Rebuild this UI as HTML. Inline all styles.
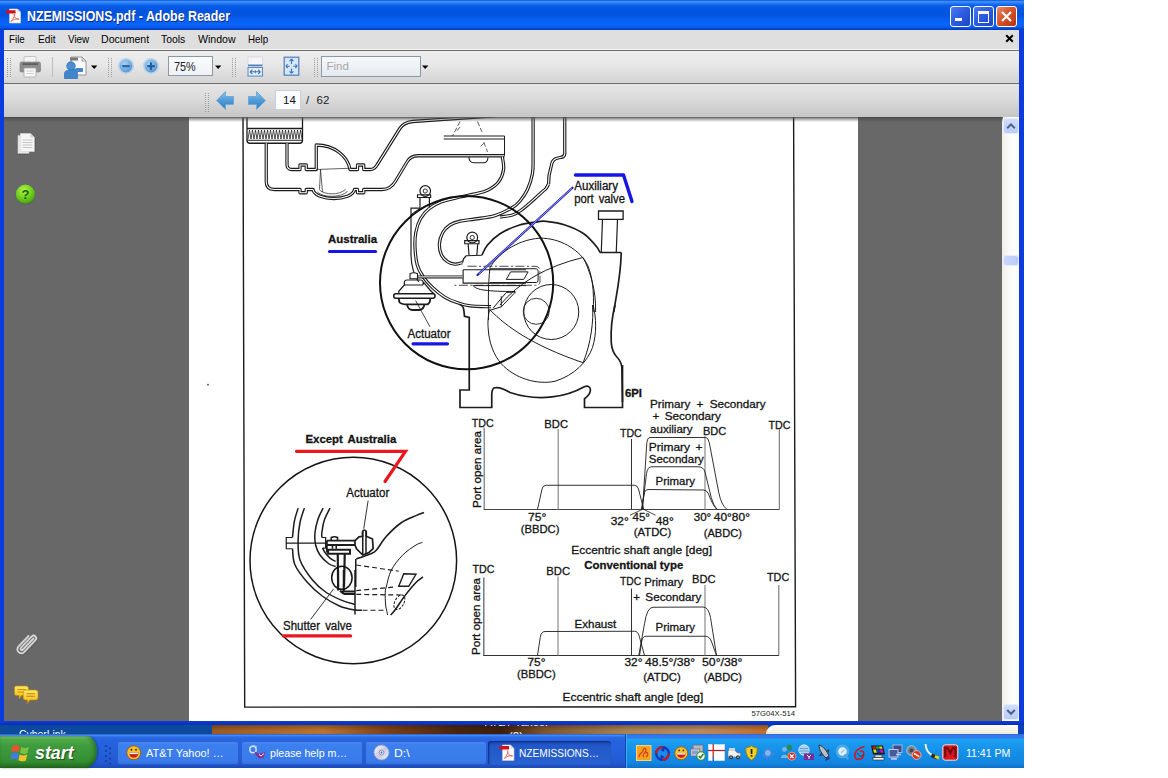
<!DOCTYPE html>
<html>
<head>
<meta charset="utf-8">
<title>NZEMISSIONS.pdf - Adobe Reader</title>
<style>
html,body{margin:0;padding:0;background:#fff;}
body{width:1168px;height:778px;position:relative;overflow:hidden;font-family:"Liberation Sans",sans-serif;}
.a{position:absolute;}
.t{position:absolute;white-space:nowrap;line-height:1;transform-origin:0 0;}
#win{left:0;top:0;width:1024px;height:725px;background:linear-gradient(to bottom,#0a3ae0 0,#0a3ae0 721px,#0c3cd8 721.5px,#0a2cb4 725px);}
#title{left:0;top:0;width:1024px;height:30px;background:linear-gradient(to bottom,#0a50d2 0%,#3a8ff8 5%,#2c7ef4 10%,#0a5ee8 18%,#0356e2 30%,#0454dc 50%,#0760f4 66%,#0a64fa 84%,#0656e6 92%,#0038b8 100%);}
#menubar{left:4px;top:30px;width:1015px;height:20px;background:#dfdfdf;}
#tb1{left:4px;top:51px;width:1015px;height:32px;background:linear-gradient(to bottom,#eeeeee 0%,#e8e8e8 40%,#d4d4d4 100%);}
#tb2{left:4px;top:84px;width:1015px;height:33px;background:linear-gradient(to bottom,#e6e6e6 0%,#dcdcdc 40%,#c6c6c6 100%);}
.hl{left:4px;width:1015px;height:1px;background:#6e6e6e;}
#pane{left:4px;top:117px;width:1015px;height:604px;background:#686868;}
#page{left:189px;top:117px;width:669px;height:604px;background:#fff;}
#sb{left:1002px;top:117px;width:17px;height:604px;background:#fafaf6;}
.menu{font-size:11px;color:#000;top:34px;}
#taskbar{left:0;top:734px;width:1024px;height:34px;background:linear-gradient(to bottom,#3a80ee 0%,#2a6be4 8%,#2663e0 20%,#2560dc 50%,#2259d2 85%,#1c4ab8 100%);}
.tbtn{top:741px;height:24px;border-radius:3px;background:linear-gradient(to bottom,#4d8cf4 0%,#3c7fee 15%,#3a7beb 80%,#346fe0 100%);box-shadow:inset 0 0 0 1px rgba(30,70,180,.55);}
.tbtxt{font-size:11.5px;color:#fff;top:747.5px;}
</style>
</head>
<body>
<div id="win" class="a"></div>
<div id="title" class="a"></div>
<div id="menubar" class="a"></div>
<div class="a" style="left:4px;top:49px;width:1015px;height:1px;background:#f6f6f6;"></div>
<div class="a hl" style="top:50px"></div>
<div id="tb1" class="a"></div>
<div class="a hl" style="top:83px"></div>
<div id="tb2" class="a"></div>
<div id="pane" class="a"></div>
<div id="page" class="a"></div>
<div id="sb" class="a"></div>
<!-- title bar -->
<svg class="a" style="left:5px;top:8px" width="18" height="16" viewBox="0 0 18 16">
  <path d="M4.5 1 L12.5 1 L15.5 4 L15.5 15 L4.5 15 Z" fill="#fff" stroke="#d6d6e2" stroke-width="0.6"/>
  <path d="M12.5 1 L12.5 4 L15.5 4 Z" fill="#d8d8e4"/>
  <rect x="1" y="2.2" width="9.6" height="3.4" rx="0.5" fill="#d4101c"/>
  <path d="M6.2 12.8 C8 11.2 9.2 9 9.6 6.9 C9.8 5.9 8.8 5.9 9 6.9 C9.5 9.4 11 11 13.6 11.4 C14.5 11.5 14.3 10.7 13.4 10.7 C10.9 10.8 8 11.6 6.5 13.1 C5.9 13.7 5.6 13.3 6.2 12.8 Z" fill="none" stroke="#e05a52" stroke-width="0.9"/>
</svg>
<div class="t" id="ttl" style="left:26.5px;top:9px;font-size:14.5px;font-weight:bold;color:#fff;text-shadow:1px 1px 0 #0a2a8c;--w:203px;transform:scaleX(0.8565)">NZEMISSIONS.pdf - Adobe Reader</div>
<!-- window buttons -->
<div class="a" style="left:950px;top:6px;width:19px;height:19px;border-radius:3px;border:1px solid #fff;background:linear-gradient(135deg,#4a7cf0 0%,#2a5be0 50%,#1d46c2 100%);"></div>
<div class="a" style="left:955px;top:18px;width:7px;height:3px;background:#fff;"></div>
<div class="a" style="left:973px;top:6px;width:19px;height:19px;border-radius:3px;border:1px solid #fff;background:linear-gradient(135deg,#4a7cf0 0%,#2a5be0 50%,#1d46c2 100%);"></div>
<div class="a" style="left:978px;top:11px;width:9px;height:8px;border:1px solid #fff;border-top-width:3px;box-sizing:content-box;"></div>
<div class="a" style="left:996px;top:6px;width:19px;height:19px;border-radius:3px;border:1px solid #fff;background:linear-gradient(135deg,#ea8a6c 0%,#d9532c 45%,#b8320e 100%);"></div>
<svg class="a" style="left:996px;top:6px" width="21" height="21" viewBox="0 0 21 21"><path d="M6 6 L15 15 M15 6 L6 15" stroke="#fff" stroke-width="2.2" stroke-linecap="butt"/></svg>
<!-- menu -->
<div class="t menu" style="left:9px;--w:16px;transform:scaleX(0.8889)">File</div>
<div class="t menu" style="left:37.5px;--w:17.5px;transform:scaleX(0.9211)">Edit</div>
<div class="t menu" style="left:67.5px;--w:21.5px;transform:scaleX(0.8958)">View</div>
<div class="t menu" style="left:101px;--w:48px;transform:scaleX(0.9600)">Document</div>
<div class="t menu" style="left:161px;--w:24.5px;transform:scaleX(0.9423)">Tools</div>
<div class="t menu" style="left:198px;--w:37.5px;transform:scaleX(0.9615)">Window</div>
<div class="t menu" style="left:248px;--w:20.5px;transform:scaleX(0.8913)">Help</div>
<svg class="a" style="left:1005px;top:34px" width="9" height="9" viewBox="0 0 9 9"><path d="M1.2 1.2 L7.8 7.8 M7.8 1.2 L1.2 7.8" stroke="#000" stroke-width="2"/></svg>
<!-- grippers -->
<svg class="a" style="left:6px;top:58px" width="6" height="20"><g fill="#9c9c9c"><rect x="1" y="0" width="1" height="1"/><rect x="4" y="0" width="1" height="1"/><rect x="1" y="2" width="1" height="1"/><rect x="4" y="2" width="1" height="1"/><rect x="1" y="4" width="1" height="1"/><rect x="4" y="4" width="1" height="1"/><rect x="1" y="6" width="1" height="1"/><rect x="4" y="6" width="1" height="1"/><rect x="1" y="8" width="1" height="1"/><rect x="4" y="8" width="1" height="1"/><rect x="1" y="10" width="1" height="1"/><rect x="4" y="10" width="1" height="1"/><rect x="1" y="12" width="1" height="1"/><rect x="4" y="12" width="1" height="1"/><rect x="1" y="14" width="1" height="1"/><rect x="4" y="14" width="1" height="1"/><rect x="1" y="16" width="1" height="1"/><rect x="4" y="16" width="1" height="1"/><rect x="1" y="18" width="1" height="1"/><rect x="4" y="18" width="1" height="1"/></g></svg>
<svg class="a" style="left:107px;top:58px" width="6" height="20"><g fill="#9c9c9c"><rect x="1" y="0" width="1" height="1"/><rect x="4" y="0" width="1" height="1"/><rect x="1" y="2" width="1" height="1"/><rect x="4" y="2" width="1" height="1"/><rect x="1" y="4" width="1" height="1"/><rect x="4" y="4" width="1" height="1"/><rect x="1" y="6" width="1" height="1"/><rect x="4" y="6" width="1" height="1"/><rect x="1" y="8" width="1" height="1"/><rect x="4" y="8" width="1" height="1"/><rect x="1" y="10" width="1" height="1"/><rect x="4" y="10" width="1" height="1"/><rect x="1" y="12" width="1" height="1"/><rect x="4" y="12" width="1" height="1"/><rect x="1" y="14" width="1" height="1"/><rect x="4" y="14" width="1" height="1"/><rect x="1" y="16" width="1" height="1"/><rect x="4" y="16" width="1" height="1"/><rect x="1" y="18" width="1" height="1"/><rect x="4" y="18" width="1" height="1"/></g></svg>
<svg class="a" style="left:231px;top:58px" width="6" height="20"><g fill="#9c9c9c"><rect x="1" y="0" width="1" height="1"/><rect x="4" y="0" width="1" height="1"/><rect x="1" y="2" width="1" height="1"/><rect x="4" y="2" width="1" height="1"/><rect x="1" y="4" width="1" height="1"/><rect x="4" y="4" width="1" height="1"/><rect x="1" y="6" width="1" height="1"/><rect x="4" y="6" width="1" height="1"/><rect x="1" y="8" width="1" height="1"/><rect x="4" y="8" width="1" height="1"/><rect x="1" y="10" width="1" height="1"/><rect x="4" y="10" width="1" height="1"/><rect x="1" y="12" width="1" height="1"/><rect x="4" y="12" width="1" height="1"/><rect x="1" y="14" width="1" height="1"/><rect x="4" y="14" width="1" height="1"/><rect x="1" y="16" width="1" height="1"/><rect x="4" y="16" width="1" height="1"/><rect x="1" y="18" width="1" height="1"/><rect x="4" y="18" width="1" height="1"/></g></svg>
<svg class="a" style="left:313px;top:58px" width="6" height="20"><g fill="#9c9c9c"><rect x="1" y="0" width="1" height="1"/><rect x="4" y="0" width="1" height="1"/><rect x="1" y="2" width="1" height="1"/><rect x="4" y="2" width="1" height="1"/><rect x="1" y="4" width="1" height="1"/><rect x="4" y="4" width="1" height="1"/><rect x="1" y="6" width="1" height="1"/><rect x="4" y="6" width="1" height="1"/><rect x="1" y="8" width="1" height="1"/><rect x="4" y="8" width="1" height="1"/><rect x="1" y="10" width="1" height="1"/><rect x="4" y="10" width="1" height="1"/><rect x="1" y="12" width="1" height="1"/><rect x="4" y="12" width="1" height="1"/><rect x="1" y="14" width="1" height="1"/><rect x="4" y="14" width="1" height="1"/><rect x="1" y="16" width="1" height="1"/><rect x="4" y="16" width="1" height="1"/><rect x="1" y="18" width="1" height="1"/><rect x="4" y="18" width="1" height="1"/></g></svg>
<svg class="a" style="left:204px;top:93px" width="6" height="20"><g fill="#9c9c9c"><rect x="1" y="0" width="1" height="1"/><rect x="4" y="0" width="1" height="1"/><rect x="1" y="2" width="1" height="1"/><rect x="4" y="2" width="1" height="1"/><rect x="1" y="4" width="1" height="1"/><rect x="4" y="4" width="1" height="1"/><rect x="1" y="6" width="1" height="1"/><rect x="4" y="6" width="1" height="1"/><rect x="1" y="8" width="1" height="1"/><rect x="4" y="8" width="1" height="1"/><rect x="1" y="10" width="1" height="1"/><rect x="4" y="10" width="1" height="1"/><rect x="1" y="12" width="1" height="1"/><rect x="4" y="12" width="1" height="1"/><rect x="1" y="14" width="1" height="1"/><rect x="4" y="14" width="1" height="1"/><rect x="1" y="16" width="1" height="1"/><rect x="4" y="16" width="1" height="1"/><rect x="1" y="18" width="1" height="1"/><rect x="4" y="18" width="1" height="1"/></g></svg>
<!-- printer -->
<svg class="a" style="left:19px;top:55px" width="24" height="24" viewBox="0 0 24 24">
  <rect x="5" y="1.5" width="12" height="7" rx="1" fill="#f4f4f4" stroke="#b9b9b9" stroke-width=".8"/>
  <rect x="1" y="7" width="20.5" height="10" rx="1.5" fill="#8d8d8d" stroke="#777" stroke-width=".6"/>
  <rect x="3.5" y="8.2" width="15.5" height="1.8" fill="#5e5e5e"/>
  <rect x="5" y="13" width="12" height="9" rx=".8" fill="#f6f6f6" stroke="#a8a8a8" stroke-width=".8"/>
  <path d="M7.5 16 H14.5 M7.5 18.5 H14.5" stroke="#c4c4c4" stroke-width=".8"/>
</svg>
<div class="a" style="left:52px;top:57px;width:1px;height:20px;background:#bdbdbd;"></div>
<!-- collaborate icon -->
<svg class="a" style="left:62px;top:54px" width="26" height="26" viewBox="0 0 26 26">
  <path d="M9 3 H20 L24 7 V21 H9 Z" fill="#f7f9fc" stroke="#8c8c8c" stroke-width=".9"/>
  <path d="M20 3 V7 H24 Z" fill="#e0e0e0" stroke="#8c8c8c" stroke-width=".7"/>
  <rect x="8" y="3.5" width="8" height="3" fill="#777"/>
  <circle cx="9" cy="12" r="4.2" fill="#4a8fd0" stroke="#2c6fb4" stroke-width=".8"/>
  <path d="M2.5 24.5 V19.5 C2.5 17 5 16 9 16 C12 16 13.5 14.8 15 14.5 H20.5 V17.5 H16 C15 18.5 15.5 21 15.5 24.5 Z" fill="#3f86cc" stroke="#2c6fb4" stroke-width=".7"/>
</svg>
<svg class="a" style="left:91px;top:65px" width="7" height="5"><path d="M0 0.5 H6.4 L3.2 4 Z" fill="#000"/></svg>
<!-- zoom -/+ -->
<svg class="a" style="left:117px;top:57px" width="18" height="18" viewBox="0 0 18 18"><defs><radialGradient id="zg" cx=".4" cy=".35" r=".7"><stop offset="0" stop-color="#a9d2f2"/><stop offset="1" stop-color="#4f8fcc"/></radialGradient></defs><circle cx="9" cy="9" r="7.2" fill="url(#zg)" stroke="#b9d3ea" stroke-width="1.6"/><rect x="5.2" y="8" width="7.6" height="2.2" rx=".6" fill="#2d68a8"/></svg>
<svg class="a" style="left:142px;top:57px" width="18" height="18" viewBox="0 0 18 18"><circle cx="9" cy="9" r="7.2" fill="url(#zg)" stroke="#b9d3ea" stroke-width="1.6"/><rect x="5.2" y="8" width="7.6" height="2.2" rx=".6" fill="#2260a6"/><rect x="7.9" y="5.3" width="2.2" height="7.6" rx=".6" fill="#2260a6"/></svg>
<!-- zoom box -->
<div class="a" style="left:168px;top:56px;width:45px;height:20px;box-sizing:border-box;border:1px solid #8b98a6;background:linear-gradient(to bottom,#fbfcfe,#eef1f6);"></div>
<div class="t" style="left:174.4px;top:61px;font-size:12px;color:#222;--w:21.6px;transform:scaleX(0.9000)">75%</div>
<svg class="a" style="left:215px;top:65px" width="7" height="5"><path d="M0 0.5 H6.4 L3.2 4 Z" fill="#000"/></svg>
<!-- fit width -->
<svg class="a" style="left:247px;top:56px" width="17" height="22" viewBox="0 0 17 22">
  <rect x="1" y="1" width="14.5" height="8" fill="#f4f6fa" stroke="#c8d0da" stroke-width=".6"/>
  <rect x="1" y="8.6" width="14.5" height="1.6" fill="#4a7eb8"/>
  <rect x="1" y="11.5" width="14.5" height="8.6" fill="#e7eff8" stroke="#5a88bd" stroke-width="1"/>
  <path d="M3 15.8 H13.5 M3 15.8 L5.4 13.6 M3 15.8 L5.4 18 M13.5 15.8 L11.1 13.6 M13.5 15.8 L11.1 18 M8.2 14.3 V17.3" stroke="#3f78b6" stroke-width="1.1" fill="none"/>
</svg>
<!-- fit page -->
<svg class="a" style="left:283px;top:56px" width="18" height="21" viewBox="0 0 18 21">
  <rect x="1.2" y="1.2" width="14.6" height="18" fill="#d6e6f6" stroke="#4e7fb6" stroke-width="1.2"/>
  <path d="M8.5 3 V8 M8.5 3 L6.6 5 M8.5 3 L10.4 5 M8.5 17.4 V12.4 M8.5 17.4 L6.6 15.4 M8.5 17.4 L10.4 15.4 M2.8 10.2 H6.8 M2.8 10.2 L4.6 8.4 M2.8 10.2 L4.6 12 M14.2 10.2 H10.2 M14.2 10.2 L12.4 8.4 M14.2 10.2 L12.4 12" stroke="#3f78b6" stroke-width="1.1" fill="none"/>
</svg>
<!-- find -->
<div class="a" style="left:321px;top:56px;width:100px;height:21px;box-sizing:border-box;border:1px solid #8b98a6;background:linear-gradient(to bottom,#f6f8fb,#e6eaf0);"></div>
<div class="t" style="left:326.5px;top:61px;font-size:11.5px;color:#a9a9a9;">Find</div>
<svg class="a" style="left:422px;top:65px" width="7" height="5"><path d="M0 0.5 H6.4 L3.2 4 Z" fill="#000"/></svg>
<!-- nav arrows -->
<svg class="a" style="left:215px;top:90px" width="20" height="21" viewBox="0 0 20 21"><defs><linearGradient id="ag" x1="0" y1="0" x2="0" y2="1"><stop offset="0" stop-color="#8cc4ee"/><stop offset=".5" stop-color="#4f9bd8"/><stop offset="1" stop-color="#2f7cc0"/></linearGradient></defs><path d="M1.5 10.5 L10.5 1.5 V6.5 H18.5 V14.5 H10.5 V19.5 Z" fill="url(#ag)" stroke="#6faad8" stroke-width="1"/></svg>
<svg class="a" style="left:247px;top:90px" width="20" height="21" viewBox="0 0 20 21"><path d="M18.5 10.5 L9.5 1.5 V6.5 H1.5 V14.5 H9.5 V19.5 Z" fill="url(#ag)" stroke="#6faad8" stroke-width="1"/></svg>
<div class="a" style="left:275px;top:90px;width:26px;height:20px;box-sizing:border-box;border:1px solid #c9d0d8;background:#fbfcfe;"></div>
<div class="t" style="left:283px;top:95px;font-size:11.5px;color:#111;">14</div>
<div class="t" style="left:306px;top:95px;font-size:11.5px;color:#222;">/</div>
<div class="t" style="left:316.5px;top:95px;font-size:11.5px;color:#222;">62</div>
<!-- pane top shadow -->

<!-- sidebar icons -->
<svg class="a" style="left:15px;top:131px" width="24" height="26" viewBox="0 0 24 26">
  <path d="M3 4.5 H14 V22.5 H3 Z" fill="#e9e9e9" stroke="#cfcfcf" stroke-width=".6"/>
  <path d="M5.5 2.5 H15.5 L19.5 6.5 V20.5 H5.5 Z" fill="#f6f6f6" stroke="#d9d9d9" stroke-width=".6"/>
  <path d="M15.5 2.5 V6.5 H19.5 Z" fill="#d0d0d0"/>
  <path d="M7.5 9 H17.5 M7.5 11.5 H17.5 M7.5 14 H17.5 M7.5 16.5 H17.5" stroke="#c2c2c2" stroke-width=".9"/>
  <path d="M3.5 23.2 H14.5 M20.2 7 V21" stroke="#4d4d4d" stroke-width=".9" opacity=".6"/>
</svg>
<svg class="a" style="left:14px;top:183px" width="23" height="23" viewBox="0 0 23 23">
  <defs><radialGradient id="hg" cx=".42" cy=".3" r=".75"><stop offset="0" stop-color="#b6f04a"/><stop offset=".55" stop-color="#6fd01c"/><stop offset="1" stop-color="#3f9a10"/></radialGradient></defs>
  <circle cx="11.4" cy="11.6" r="10" fill="#4a4a4a" opacity=".5"/>
  <circle cx="11.4" cy="11.2" r="9.6" fill="url(#hg)"/>
  <text x="11.4" y="16" font-family="Liberation Sans" font-weight="bold" font-size="13" text-anchor="middle" fill="#14640c">?</text>
</svg>
<svg class="a" style="left:14px;top:630px" width="26" height="28" viewBox="0 0 26 28">
  <path d="M19.5 8.5 L9 19.5 C7.6 21 5.6 19.2 7 17.6 L17.6 6.6 C20.2 4 23.8 7.4 21.4 10.2 L10.4 21.8 C6.6 25.6 0.8 20.6 4.6 16.4 L14.6 6" fill="none" stroke="#555" stroke-width="2.6" stroke-linecap="round" opacity=".55" transform="translate(.8,.9)"/>
  <path d="M19.5 8.5 L9 19.5 C7.6 21 5.6 19.2 7 17.6 L17.6 6.6 C20.2 4 23.8 7.4 21.4 10.2 L10.4 21.8 C6.6 25.6 0.8 20.6 4.6 16.4 L14.6 6" fill="none" stroke="#d6d6d6" stroke-width="1.9" stroke-linecap="round"/>
</svg>
<svg class="a" style="left:13px;top:684px" width="28" height="22" viewBox="0 0 28 22">
  <defs><linearGradient id="cg" x1="0" y1="0" x2="0" y2="1"><stop offset="0" stop-color="#ffe868"/><stop offset="1" stop-color="#f2b80e"/></linearGradient></defs>
  <path d="M3.5 2 H13 C14.5 2 15.5 3 15.5 4.5 V9 C15.5 10.5 14.5 11.5 13 11.5 H8.5 L6 15 L6.2 11.5 H3.5 C2 11.5 1.5 10.5 1.5 9 V4.5 C1.5 3 2 2 3.5 2 Z" fill="url(#cg)" stroke="#c58a08" stroke-width=".7"/>
  <path d="M4.5 5.5 H12.5 M4.5 8 H12.5" stroke="#c9920a" stroke-width="1"/>
  <path d="M12.5 6 H22.5 C24 6 25 7 25 8.5 V13.5 C25 15 24 16 22.5 16 H17 L14.2 19.6 L14.6 16 H12.5 C11 16 10.2 15 10.2 13.5 V8.5 C10.2 7 11 6 12.5 6 Z" fill="url(#cg)" stroke="#c58a08" stroke-width=".7"/>
  <path d="M13.5 9.7 H22 M13.5 12.3 H22" stroke="#b98408" stroke-width="1.1"/>
</svg>
<!-- scrollbar -->
<div class="a" style="left:1002px;top:117px;width:17px;height:604px;background:linear-gradient(to right,#f0eee8,#fbfbf8 45%,#fefefe);"></div>
<div class="a" style="left:1004px;top:119px;width:14px;height:14px;border-radius:2px;background:linear-gradient(to bottom,#cfdcfd,#b9cbf8);box-shadow:0 0 0 1px #e6ecfb;"></div>
<svg class="a" style="left:1004px;top:119px" width="14" height="14"><path d="M3.2 9.2 L7 5.4 L10.8 9.2" fill="none" stroke="#4d6185" stroke-width="2"/></svg>
<div class="a" style="left:1004px;top:705px;width:14px;height:14px;border-radius:2px;background:linear-gradient(to bottom,#cfdcfd,#b9cbf8);box-shadow:0 0 0 1px #e6ecfb;"></div>
<svg class="a" style="left:1004px;top:705px" width="14" height="14"><path d="M3.2 5 L7 8.8 L10.8 5" fill="none" stroke="#4d6185" stroke-width="2"/></svg>
<div class="a" style="left:1004px;top:256px;width:14px;height:9px;border-radius:2px;background:linear-gradient(to right,#c9d7fc,#bccdfa);box-shadow:0 0 0 1px #e6ecfb;"></div>

<svg class="a" style="left:0;top:0" width="1168" height="778" viewBox="0 0 1168 778" font-family="Liberation Sans, sans-serif">
<defs><clipPath id="pg"><rect x="189" y="117.5" width="669" height="603.5"/></clipPath></defs>
<g clip-path="url(#pg)">
<path d="M 247.00 114.50 L 247.00 140.25 Q 247.00 143.25 250.00 143.25 L 299.50 143.25 Q 302.50 143.25 302.50 140.25 L 302.50 114.50" fill="none" stroke="#1c1c1c" stroke-width="1.3" />
<path d="M 247.00 128.50 L 302.50 128.50" fill="none" stroke="#1c1c1c" stroke-width="1.6" />
<path d="M 247.00 140.25 L 302.50 140.25" fill="none" stroke="#1c1c1c" stroke-width="1.0" />
<path d="M 248.00 139.00 L 249.50 130.00 L 251.00 139.00 L 252.50 130.00 L 254.00 139.00 L 255.50 130.00 L 257.00 139.00 L 258.50 130.00 L 260.00 139.00 L 261.50 130.00 L 263.00 139.00 L 264.50 130.00 L 266.00 139.00 L 267.50 130.00 L 269.00 139.00 L 270.50 130.00 L 272.00 139.00 L 273.50 130.00 L 275.00 139.00 L 276.50 130.00 L 278.00 139.00 L 279.50 130.00 L 281.00 139.00 L 282.50 130.00 L 284.00 139.00 L 285.50 130.00 L 287.00 139.00 L 288.50 130.00 L 290.00 139.00 L 291.50 130.00 L 293.00 139.00 L 294.50 130.00 L 296.00 139.00 L 297.50 130.00 L 299.00 139.00 L 300.50 130.00 L 302.00 139.00" fill="none" stroke="#222" stroke-width="0.8" />
<path d="M 266.25 143.25 L 266.25 181.50 Q 266.25 189.50 274.50 189.50 L 300.00 189.50 L 300.00 192.75 L 306.25 192.75 L 306.25 189.50 L 313.00 189.50 C 315.00 201.50 352.50 201.50 354.50 189.50 L 357.50 189.50 L 357.50 192.75 L 363.75 192.75 L 363.75 189.50 L 382.00 189.50 Q 390.75 189.50 395.75 180.75 L 407.00 162.00 Q 410.50 155.75 418.00 155.75 L 504.50 155.75" fill="none" stroke="#1c1c1c" stroke-width="3.3" stroke-linejoin="round"/>
<path d="M 266.25 143.25 L 266.25 181.50 Q 266.25 189.50 274.50 189.50 L 300.00 189.50 L 300.00 192.75 L 306.25 192.75 L 306.25 189.50 L 313.00 189.50 C 315.00 201.50 352.50 201.50 354.50 189.50 L 357.50 189.50 L 357.50 192.75 L 363.75 192.75 L 363.75 189.50 L 382.00 189.50 Q 390.75 189.50 395.75 180.75 L 407.00 162.00 Q 410.50 155.75 418.00 155.75 L 504.50 155.75" fill="none" stroke="#fff" stroke-width="1.1" stroke-linejoin="round"/>
<path d="M 468.75 157.00 Q 469.50 162.75 473.75 162.75 L 483.75 162.75 Q 487.50 162.75 488.00 157.50" fill="none" stroke="#1c1c1c" stroke-width="1.1" />
<path d="M 317.50 192.00 C 322.50 197.50 340.00 198.25 347.50 191.50" fill="none" stroke="#1c1c1c" stroke-width="0.7" />
<path d="M 319.50 190.00 C 325.00 195.00 338.75 195.50 345.50 189.50" fill="none" stroke="#1c1c1c" stroke-width="0.7" />
<path d="M502.30 156.50 C502.52 158.67 504.23 165.25 503.60 169.50 C502.97 173.75 501.18 178.53 498.50 182.00 C495.82 185.47 491.42 188.32 487.50 190.30 C483.58 192.28 479.58 192.78 475.00 193.90 C470.42 195.02 465.67 195.65 460.00 197.00 C454.33 198.35 446.17 200.03 441.00 202.00 C435.83 203.97 432.42 206.00 429.00 208.80 C425.58 211.60 422.70 214.85 420.50 218.80 C418.30 222.75 416.72 227.72 415.80 232.50 C414.88 237.28 414.75 242.08 415.00 247.50 C415.25 252.92 415.97 260.17 417.30 265.00 C418.63 269.83 420.47 272.75 423.00 276.50 C425.53 280.25 428.83 284.03 432.50 287.50 C436.17 290.97 440.83 294.75 445.00 297.30 C449.17 299.85 453.33 301.38 457.50 302.80 C461.67 304.22 464.42 305.15 470.00 305.80 C475.58 306.45 487.50 306.55 491.00 306.70" fill="none" stroke="#1c1c1c" stroke-width="3.3" stroke-linejoin="round"/>
<path d="M502.30 156.50 C502.52 158.67 504.23 165.25 503.60 169.50 C502.97 173.75 501.18 178.53 498.50 182.00 C495.82 185.47 491.42 188.32 487.50 190.30 C483.58 192.28 479.58 192.78 475.00 193.90 C470.42 195.02 465.67 195.65 460.00 197.00 C454.33 198.35 446.17 200.03 441.00 202.00 C435.83 203.97 432.42 206.00 429.00 208.80 C425.58 211.60 422.70 214.85 420.50 218.80 C418.30 222.75 416.72 227.72 415.80 232.50 C414.88 237.28 414.75 242.08 415.00 247.50 C415.25 252.92 415.97 260.17 417.30 265.00 C418.63 269.83 420.47 272.75 423.00 276.50 C425.53 280.25 428.83 284.03 432.50 287.50 C436.17 290.97 440.83 294.75 445.00 297.30 C449.17 299.85 453.33 301.38 457.50 302.80 C461.67 304.22 464.42 305.15 470.00 305.80 C475.58 306.45 487.50 306.55 491.00 306.70" fill="none" stroke="#fff" stroke-width="1.1" stroke-linejoin="round"/>
<path d="M 287.00 143.25 L 287.00 164.50 Q 287.00 169.50 292.00 169.50 L 300.00 169.50 L 300.00 165.00 L 306.25 165.00 L 306.25 169.50 L 316.25 169.50 L 316.25 145.00 C 335.00 145.00 348.00 157.00 350.00 169.50 L 357.50 169.50 L 357.50 165.00 L 363.75 165.00 L 363.75 169.50 L 370.00 169.50 Q 374.50 169.50 377.00 165.00 L 400.00 128.25 Q 403.75 122.50 412.50 121.50 L 495.00 115.75" fill="none" stroke="#1c1c1c" stroke-width="3.3" stroke-linejoin="round"/>
<path d="M 287.00 143.25 L 287.00 164.50 Q 287.00 169.50 292.00 169.50 L 300.00 169.50 L 300.00 165.00 L 306.25 165.00 L 306.25 169.50 L 316.25 169.50 L 316.25 145.00 C 335.00 145.00 348.00 157.00 350.00 169.50 L 357.50 169.50 L 357.50 165.00 L 363.75 165.00 L 363.75 169.50 L 370.00 169.50 Q 374.50 169.50 377.00 165.00 L 400.00 128.25 Q 403.75 122.50 412.50 121.50 L 495.00 115.75" fill="none" stroke="#fff" stroke-width="1.1" stroke-linejoin="round"/>
<path d="M 316.25 169.50 L 350.00 168.25 M 320.50 169.50 L 322.50 192.00 M 320.50 169.50 L 319.50 189.50" fill="none" stroke="#1c1c1c" stroke-width="0.7" />
<path d="M 443.75 136.00 L 504.50 136.00 L 504.50 155.75 M 443.75 139.00 L 504.50 139.00" fill="none" stroke="#1c1c1c" stroke-width="1.0" />
<path d="M 460.00 121.50 L 452.50 136.00 M 477.50 121.50 L 482.00 132.00 M 483.75 142.00 L 487.50 152.00 M 457.00 130.75 L 460.00 127.00 M 480.50 146.50 L 483.75 143.25" fill="none" stroke="#1c1c1c" stroke-width="0.7" stroke-dasharray="5 2"/>
<path d="M 564.75 115.75 L 564.75 153.50 Q 564.50 156.75 561.25 157.25 L 556.25 158.50 Q 553.12 159.50 551.88 163.25 L 549.00 175.75 L 548.62 183.88" fill="none" stroke="#1c1c1c" stroke-width="3.3" stroke-linejoin="round"/>
<path d="M 564.75 115.75 L 564.75 153.50 Q 564.50 156.75 561.25 157.25 L 556.25 158.50 Q 553.12 159.50 551.88 163.25 L 549.00 175.75 L 548.62 183.88" fill="none" stroke="#fff" stroke-width="1.1" stroke-linejoin="round"/>
<path d="M548.60 184.00 C548.17 184.75 546.92 187.33 546.00 188.50 C545.08 189.67 544.77 189.50 543.10 191.00 C541.43 192.50 538.39 195.33 536.00 197.50 C533.61 199.67 531.42 201.75 528.75 204.00 C526.08 206.25 522.71 209.17 520.00 211.00 C517.29 212.83 515.83 214.00 512.50 215.00 C509.17 216.00 502.08 216.67 500.00 217.00" fill="none" stroke="#1c1c1c" stroke-width="3.3" stroke-linejoin="round"/>
<path d="M548.60 184.00 C548.17 184.75 546.92 187.33 546.00 188.50 C545.08 189.67 544.77 189.50 543.10 191.00 C541.43 192.50 538.39 195.33 536.00 197.50 C533.61 199.67 531.42 201.75 528.75 204.00 C526.08 206.25 522.71 209.17 520.00 211.00 C517.29 212.83 515.83 214.00 512.50 215.00 C509.17 216.00 502.08 216.67 500.00 217.00" fill="none" stroke="#fff" stroke-width="1.1" stroke-linejoin="round"/>
<path d="M533.10 115.00 C533.10 121.58 533.20 144.79 533.10 154.50 C533.00 164.21 533.43 167.42 532.50 173.25 C531.57 179.08 529.58 184.88 527.50 189.50 C525.42 194.12 522.50 198.00 520.00 201.00 C517.50 204.00 516.67 205.07 512.50 207.50 C508.33 209.93 501.25 213.68 495.00 215.60 C488.75 217.52 480.83 218.07 475.00 219.00 C469.17 219.93 464.17 220.20 460.00 221.20 C455.83 222.20 452.87 223.12 450.00 225.00 C447.13 226.88 444.57 229.38 442.80 232.50 C441.03 235.62 439.62 240.00 439.40 243.75 C439.18 247.50 440.15 252.01 441.50 255.00 C442.85 257.99 445.25 260.17 447.50 261.70 C449.75 263.23 452.53 264.05 455.00 264.20 C457.47 264.35 461.08 262.87 462.30 262.60" fill="none" stroke="#1c1c1c" stroke-width="3.3" stroke-linejoin="round"/>
<path d="M533.10 115.00 C533.10 121.58 533.20 144.79 533.10 154.50 C533.00 164.21 533.43 167.42 532.50 173.25 C531.57 179.08 529.58 184.88 527.50 189.50 C525.42 194.12 522.50 198.00 520.00 201.00 C517.50 204.00 516.67 205.07 512.50 207.50 C508.33 209.93 501.25 213.68 495.00 215.60 C488.75 217.52 480.83 218.07 475.00 219.00 C469.17 219.93 464.17 220.20 460.00 221.20 C455.83 222.20 452.87 223.12 450.00 225.00 C447.13 226.88 444.57 229.38 442.80 232.50 C441.03 235.62 439.62 240.00 439.40 243.75 C439.18 247.50 440.15 252.01 441.50 255.00 C442.85 257.99 445.25 260.17 447.50 261.70 C449.75 263.23 452.53 264.05 455.00 264.20 C457.47 264.35 461.08 262.87 462.30 262.60" fill="none" stroke="#fff" stroke-width="1.1" stroke-linejoin="round"/>
<path d="M 462.50 262.62 Q 463.12 258.12 466.25 255.75 L 481.88 255.25" fill="none" stroke="#1c1c1c" stroke-width="1.2" />
<path d="M481.90 255.20 C482.83 253.50 484.48 248.57 487.50 245.00 C490.52 241.43 494.79 237.03 500.00 233.75 C505.21 230.47 512.50 227.29 518.75 225.30 C525.00 223.31 532.92 222.47 537.50 221.80 C542.08 221.13 541.67 220.77 546.25 221.30 C550.83 221.83 558.75 222.93 565.00 225.00 C571.25 227.07 578.54 230.21 583.75 233.75 C588.96 237.29 593.54 243.12 596.25 246.25 C598.96 249.38 599.38 251.46 600.00 252.50" fill="none" stroke="#1c1c1c" stroke-width="1.7" />
<path d="M 600.00 252.50 L 621.25 252.50" fill="none" stroke="#1c1c1c" stroke-width="1.7" />
<circle cx="425.25" cy="191.00" r="5.3" fill="#fff" stroke="#1c1c1c" stroke-width="1.2"/>
<circle cx="425.25" cy="191.00" r="2.1" fill="none" stroke="#1c1c1c" stroke-width="0.9"/>
<path d="M 417.50 194.75 L 430.62 194.75 L 430.62 197.50 L 417.50 197.50 Z M 420.00 197.50 L 420.00 207.75 M 429.38 197.50 L 429.38 207.25" fill="none" stroke="#1c1c1c" stroke-width="1.2" />
<circle cx="472.25" cy="237.50" r="5.4" fill="#fff" stroke="#1c1c1c" stroke-width="1.2"/>
<circle cx="472.25" cy="237.50" r="2.1" fill="none" stroke="#1c1c1c" stroke-width="0.9"/>
<path d="M 464.75 240.62 L 479.00 240.62 L 479.00 243.75 L 464.75 243.75 Z M 468.12 243.75 L 469.00 255.00 M 477.75 243.75 L 476.88 255.00" fill="none" stroke="#1c1c1c" stroke-width="1.2" />
<path d="M 420.00 208.12 L 411.00 208.12 L 411.00 255.00 C 411.25 265.00 413.75 275.00 418.75 282.00" fill="none" stroke="#1c1c1c" stroke-width="1.2" />
<path d="M 411.00 215.00 C 417.50 208.75 428.75 203.75 441.25 200.62" fill="none" stroke="#1c1c1c" stroke-width="1.0" />
<path d="M 463.12 269.75 L 463.12 283.12 L 526.00 283.12 M 463.12 269.75 L 526.00 269.75" fill="none" stroke="#1c1c1c" stroke-width="1.1" />
<path d="M 490.00 268.75 L 536.25 268.75 Q 538.12 269.00 538.12 271.25 L 538.12 280.00 Q 538.12 282.50 536.25 282.50 L 490.00 282.50" fill="none" stroke="#1c1c1c" stroke-width="1.0" />
<path d="M 467.50 266.25 L 535.00 266.25 Q 539.75 266.50 540.00 270.00 L 540.00 281.88 Q 539.75 285.25 535.62 285.25 L 452.50 285.25" fill="none" stroke="#1c1c1c" stroke-width="0.8" stroke-dasharray="9 2.5 2 2.5"/>
<path d="M 510.62 271.88 L 528.12 271.88 L 523.75 279.38 L 506.25 279.38 Z" fill="none" stroke="#1c1c1c" stroke-width="1.0" />
<path d="M 473.12 285.62 C 476.25 290.00 487.50 291.50 515.00 291.50 M 473.12 285.62 L 526.00 285.62" fill="none" stroke="#1c1c1c" stroke-width="1.0" />
<path d="M 515.62 291.88 L 501.25 306.88 L 490.62 310.00 M 501.25 296.25 L 501.25 306.88 M 515.62 291.88 L 506.25 292.50 L 493.12 308.12" fill="none" stroke="#1c1c1c" stroke-width="1.0" />
<path d="M 411.25 276.88 L 463.12 276.88" fill="none" stroke="#1c1c1c" stroke-width="3.0" stroke-linejoin="round"/>
<path d="M 411.25 276.88 L 463.12 276.88" fill="none" stroke="#fff" stroke-width="1.0" stroke-linejoin="round"/>
<path d="M 410.00 273.75 Q 413.75 271.88 417.50 273.75 L 417.50 278.75 L 410.00 278.75 Z" fill="#fff" stroke="#1c1c1c" stroke-width="1.1" />
<path d="M 404.38 285.00 L 404.38 281.88 Q 405.00 280.00 406.88 280.00 L 420.62 280.00 Q 422.50 280.00 423.12 281.88 L 423.12 285.00 M 404.38 285.00 L 423.12 285.00 M 404.38 285.00 L 398.75 291.25 L 398.75 294.00 M 423.12 281.88 L 430.00 290.00 L 434.00 294.00" fill="none" stroke="#1c1c1c" stroke-width="1.2" />
<rect x="393.75" y="293.75" width="41.25" height="4.50" rx="2" fill="#fff" stroke="#1c1c1c" stroke-width="1.6"/>
<path d="M 398.75 298.25 L 399.38 302.25 Q 401.25 304.38 406.25 304.38 L 427.50 304.38 Q 430.25 303.12 430.25 298.25 M 406.88 304.38 Q 408.12 310.00 412.50 310.00 L 419.38 310.00 Q 423.75 309.38 424.38 304.38" fill="none" stroke="#1c1c1c" stroke-width="1.8" />
<path d="M 415.62 300.62 L 430.00 326.88" fill="none" stroke="#1c1c1c" stroke-width="0.8" />
<path d="M 602.50 219.38 L 601.25 252.50 M 617.50 219.38 L 616.25 252.50" fill="none" stroke="#1c1c1c" stroke-width="1.2" />
<path d="M 598.50 211.00 L 623.12 211.00 L 623.12 219.38 L 598.50 219.38 Z" fill="none" stroke="#1c1c1c" stroke-width="1.3" />
<path d="M 621.25 252.50 C 620.62 277.50 616.25 295.00 613.75 312.00" fill="none" stroke="#1c1c1c" stroke-width="1.7" />
<path d="M 615.00 305.00 C 611.88 317.50 610.62 330.00 611.25 342.50 Q 611.88 351.25 616.25 356.25 Q 621.25 361.25 621.88 367.50 L 622.50 402.00" fill="none" stroke="#1c1c1c" stroke-width="1.7" />
<path d="M 622.50 365.00 L 622.50 407.50 L 584.50 407.50 L 584.50 398.75 Q 590.00 395.00 590.50 390.00 Q 590.00 384.50 583.75 387.00 C 567.50 396.25 540.00 402.50 510.00 392.50 Q 500.00 386.25 493.75 388.00 Q 491.75 390.00 491.75 395.00 L 491.75 407.50 L 460.00 407.50 L 460.00 390.00 L 469.25 390.00 L 469.25 317.50 L 464.50 316.25 L 463.75 309.50 Q 463.00 305.00 458.75 304.25" fill="none" stroke="#1c1c1c" stroke-width="1.7" />
<path d="M 490.00 267.50 C 497.50 255.00 515.00 240.00 540.00 238.12 C 560.00 238.12 577.50 248.75 586.25 262.50 C 592.50 273.75 594.38 292.50 593.12 312.00" fill="none" stroke="#1c1c1c" stroke-width="1.0" />
<path d="M 593.12 305.00 C 596.25 317.50 596.88 333.75 592.50 347.50 C 587.50 361.25 575.00 375.00 555.00 381.25 C 537.50 385.00 515.00 378.75 501.25 363.75 C 493.75 355.00 488.75 342.50 488.12 327.50 C 487.50 320.00 488.75 312.50 490.00 308.75" fill="none" stroke="#1c1c1c" stroke-width="1.0" />
<path d="M 490.00 267.50 C 487.75 286.25 488.50 305.00 488.50 320.00" fill="none" stroke="#1c1c1c" stroke-width="1.0" />
<path d="M 500.00 305.00 Q 528.62 270.75 582.75 257.50" fill="none" stroke="#1c1c1c" stroke-width="1.0" />
<path d="M 583.12 257.50 C 590.00 271.25 596.25 290.00 595.62 312.00" fill="none" stroke="#1c1c1c" stroke-width="1.0" />
<path d="M 592.50 305.00 C 593.75 320.00 591.25 342.50 583.12 362.75" fill="none" stroke="#1c1c1c" stroke-width="1.0" />
<path d="M 490.00 310.00 C 506.25 326.25 531.25 345.00 583.12 362.75" fill="none" stroke="#1c1c1c" stroke-width="1.0" />
<circle cx="551.25" cy="312" r="27.5" fill="none" stroke="#1c1c1c" stroke-width="1"/>
<circle cx="536.25" cy="311.3" r="13" fill="none" stroke="#1c1c1c" stroke-width="0.9"/>
<circle cx="466.6" cy="282.7" r="86.6" fill="none" stroke="#111" stroke-width="2"/>
<circle cx="353.3" cy="560.5" r="103.3" fill="none" stroke="#141414" stroke-width="1.5"/>
<path d="M298.12 508.12 C297.50 510.31 295.31 516.35 294.38 521.25 C293.44 526.15 292.81 534.79 292.50 537.50" fill="none" stroke="#1c1c1c" stroke-width="1.5" />
<path d="M292.50 548.75 C292.92 551.46 292.50 559.38 295.00 565.00 C297.50 570.62 302.92 577.29 307.50 582.50 C312.08 587.71 317.08 592.29 322.50 596.25 C327.92 600.21 334.58 603.96 340.00 606.25 C345.42 608.54 351.35 609.33 355.00 610.00 C358.65 610.67 360.73 610.21 361.88 610.25" fill="none" stroke="#1c1c1c" stroke-width="1.5" />
<path d="M304.38 508.12 C303.65 510.52 301.04 517.19 300.00 522.50 C298.96 527.81 298.12 533.75 298.12 540.00 C298.12 546.25 297.60 553.33 300.00 560.00 C302.40 566.67 308.12 574.58 312.50 580.00 C316.88 585.42 321.25 589.06 326.25 592.50 C331.25 595.94 337.71 598.65 342.50 600.62 C347.29 602.60 352.92 603.75 355.00 604.38" fill="none" stroke="#1c1c1c" stroke-width="1.5" />
<path d="M323.12 508.12 C322.29 509.90 319.48 514.69 318.12 518.75 C316.77 522.81 315.42 528.12 315.00 532.50 C314.58 536.88 314.79 541.25 315.62 545.00 C316.46 548.75 317.81 551.88 320.00 555.00 C322.19 558.12 326.15 561.83 328.75 563.75 C331.35 565.67 334.48 566.04 335.62 566.50" fill="none" stroke="#1c1c1c" stroke-width="1.5" />
<path d="M330.00 508.12 C329.06 510.10 325.73 515.94 324.38 520.00 C323.02 524.06 322.29 529.58 321.88 532.50 C321.46 535.42 321.88 536.67 321.88 537.50" fill="none" stroke="#1c1c1c" stroke-width="1.5" />
<path d="M322.50 548.12 C322.92 548.85 323.75 550.83 325.00 552.50 C326.25 554.17 328.23 556.62 330.00 558.12 C331.77 559.62 334.69 560.94 335.62 561.50" fill="none" stroke="#1c1c1c" stroke-width="1.5" />
<path d="M 292.50 537.50 L 286.25 537.50 L 286.25 548.75 L 292.50 548.75 M 286.25 543.12 L 326.88 543.12 M 321.88 537.50 L 325.62 537.50 L 325.62 548.12 L 322.50 548.12" fill="none" stroke="#1c1c1c" stroke-width="1.2" />
<path d="M 326.88 540.62 L 355.00 540.62 M 326.88 545.00 L 355.00 545.00 M 326.88 540.62 L 326.88 552.50" fill="none" stroke="#1c1c1c" stroke-width="1.8" />
<path d="M 331.25 540.62 L 331.25 537.50 Q 334.38 536.00 337.50 537.50 L 337.50 540.62 M 332.50 545.00 L 332.50 548.75 M 336.25 545.00 L 336.25 548.75" fill="none" stroke="#1c1c1c" stroke-width="1.6" />
<path d="M 328.12 549.75 L 350.00 549.75 L 350.00 553.75 L 328.12 553.75 Z" fill="none" stroke="#1c1c1c" stroke-width="2.0" />
<path d="M 355.00 540.62 L 359.00 536.88 L 362.50 536.25 L 362.50 531.50 Q 364.38 528.50 366.25 531.50 L 366.25 536.25 L 372.50 539.00 L 373.12 548.75 L 369.00 552.50 L 362.75 555.00 L 356.50 548.75 L 355.00 545.00 Z" fill="#fff" stroke="#1c1c1c" stroke-width="1.7" />
<path d="M 362.75 531.25 L 362.75 555.00 M 366.00 531.25 L 366.00 554.38" fill="none" stroke="#1c1c1c" stroke-width="1.5" />
<path d="M 368.12 500.62 L 363.75 528.75" fill="none" stroke="#1c1c1c" stroke-width="0.9" />
<path d="M 337.75 553.75 L 338.12 587.00 M 344.75 553.75 L 344.00 587.00" fill="none" stroke="#1c1c1c" stroke-width="2.2" />
<path d="M 338.12 570.00 L 338.12 590.62 M 343.75 570.00 L 343.75 591.25 M 340.00 591.50 L 355.00 591.50 M 343.75 594.00 L 355.00 594.00 M 340.00 590.62 L 343.75 594.00" fill="none" stroke="#1c1c1c" stroke-width="2.0" />
<ellipse cx="341.88" cy="577.75" rx="10.2" ry="11.5" fill="none" stroke="#141414" stroke-width="1.5"/>
<path d="M 333.75 588.75 L 310.62 619.38" fill="none" stroke="#1c1c1c" stroke-width="0.9" />
<path d="M424.00 512.50 C422.67 513.02 419.79 513.92 416.00 515.62 C412.21 517.33 406.21 519.27 401.25 522.75 C396.29 526.23 390.42 531.92 386.25 536.50 C382.08 541.08 378.96 547.33 376.25 550.25 C373.54 553.17 373.33 552.54 370.00 554.00 C366.67 555.46 358.54 558.17 356.25 559.00" fill="none" stroke="#1c1c1c" stroke-width="1.6" />
<path d="M 355.75 559.00 L 355.75 587.00" fill="none" stroke="#1c1c1c" stroke-width="1.5" />
<path d="M 355.00 570.00 L 355.00 614.38" fill="none" stroke="#1c1c1c" stroke-width="1.5" />
<path d="M422.50 542.50 C421.42 542.92 419.33 542.88 416.00 545.00 C412.67 547.12 406.62 551.04 402.50 555.25 C398.38 559.46 393.96 564.96 391.25 570.25 C388.54 575.54 387.25 583.29 386.25 587.00 C385.25 590.71 385.35 589.50 385.25 592.50 C385.15 595.50 385.21 601.25 385.62 605.00 C386.04 608.75 387.40 613.33 387.75 615.00" fill="none" stroke="#1c1c1c" stroke-width="1.0" />
<path d="M423.00 577.00 C421.83 577.92 419.00 579.40 416.00 582.50 C413.00 585.60 408.50 591.04 405.00 595.62 C401.50 600.21 397.40 606.77 395.00 610.00 C392.60 613.23 391.35 614.17 390.62 615.00" fill="none" stroke="#1c1c1c" stroke-width="1.6" />
<path d="M 356.25 565.00 L 398.75 571.25" fill="none" stroke="#1c1c1c" stroke-width="1.1" stroke-dasharray="5 3"/>
<path d="M 356.25 590.62 L 395.00 586.88 M 356.25 594.38 L 401.25 595.00 M 362.50 610.25 L 386.25 610.25" fill="none" stroke="#1c1c1c" stroke-width="1.2" stroke-dasharray="5 3"/>
<path d="M 403.75 573.75 L 416.00 574.25 L 408.75 586.25 L 398.75 586.25 Z" fill="none" stroke="#1c1c1c" stroke-width="1.4" />
<ellipse cx="399.38" cy="602.25" rx="4.5" ry="8" transform="rotate(28 399.38 602.25)" fill="none" stroke="#141414" stroke-width="1" stroke-dasharray="2.5 1.5"/>
<circle cx="208" cy="384.7" r="0.9" fill="#444"/>
<path d="M243 116 L244.7 707.1 L795.6 706.8 L793.6 116" fill="none" stroke="#1a1a1a" stroke-width="1.4"/>
<path d="M484.2 427.5 V509.5" fill="none" stroke="#777" stroke-width="1.2"/><path d="M483.7 509.5 H779.5" fill="none" stroke="#444" stroke-width="1.1"/>
<path d="M558.2 429 V509.5" stroke="#8a8a8a" stroke-width="1.2"/>
<path d="M631.5 439 V509.5" stroke="#333" stroke-width="1"/>
<path d="M705 436 V509.5" stroke="#8a8a8a" stroke-width="1.2"/>
<path d="M779.3 429.5 V509.5" stroke="#666" stroke-width="1"/>
<path d="M 537.50 509.50 L 542.00 489.00 Q 542.75 485.25 546.25 485.25 L 634.50 485.25 Q 637.50 485.25 638.50 489.00 L 643.75 509.50" fill="none" stroke="#1c1c1c" stroke-width="0.9" />
<path d="M 641.25 509.50 L 644.50 492.50 Q 645.25 489.50 648.00 489.50 L 703.75 490.00 Q 707.00 490.25 708.50 494.00 Q 712.50 505.00 717.00 509.50" fill="none" stroke="#1c1c1c" stroke-width="0.9" />
<path d="M 642.00 509.50 L 646.50 473.75 Q 647.50 466.75 652.00 466.75 L 698.00 466.75 Q 703.50 466.75 705.00 472.00 L 711.25 497.50 Q 713.75 506.25 717.00 509.50" fill="none" stroke="#1c1c1c" stroke-width="0.9" />
<path d="M 642.50 509.50 L 646.75 443.75 Q 647.25 437.50 650.00 437.50 L 705.50 437.50 Q 708.25 437.50 709.25 442.50 L 718.75 492.50 Q 721.25 505.00 727.00 509.50" fill="none" stroke="#1c1c1c" stroke-width="0.9" />
<path d="M 630.00 515.25 L 642.00 509.50 M 655.50 515.25 L 644.00 509.50" fill="none" stroke="#1c1c1c" stroke-width="0.8" />
<path d="M483.8 577.5 V655.5" fill="none" stroke="#777" stroke-width="1.5"/><path d="M483.2 655.5 H779" fill="none" stroke="#333" stroke-width="1.1"/>
<path d="M558 576.5 V655.5" stroke="#8a8a8a" stroke-width="1.2"/>
<path d="M631.5 588.5 V655.5" stroke="#333" stroke-width="1"/>
<path d="M705 585 V655.5" stroke="#8a8a8a" stroke-width="1.2"/>
<path d="M778.8 585 V655.5" stroke="#666" stroke-width="1"/>
<path d="M 537.50 655.50 L 540.25 637.50 Q 541.00 631.50 545.00 631.50 L 634.50 631.25 Q 638.00 631.25 639.25 636.25 L 644.50 655.50" fill="none" stroke="#1c1c1c" stroke-width="0.9" />
<path d="M 638.75 655.50 L 644.50 623.75 Q 647.00 607.25 653.00 607.25 L 703.00 607.00 Q 708.50 607.00 710.50 617.50 L 716.50 655.50" fill="none" stroke="#1c1c1c" stroke-width="0.9" />
<path d="M 639.50 655.50 L 641.75 641.25 Q 642.50 636.25 646.00 636.25 L 705.50 636.25 Q 710.00 636.25 712.00 643.00 L 716.50 655.50" fill="none" stroke="#1c1c1c" stroke-width="0.9" />
<text x="471.75" y="426.75" font-size="11.5"  textLength="22.00" lengthAdjust="spacingAndGlyphs" fill="#141414" stroke="#141414" stroke-width="0.3" >TDC</text>
<text x="544.25" y="427.50" font-size="11.5"  textLength="23.75" lengthAdjust="spacingAndGlyphs" fill="#141414" stroke="#141414" stroke-width="0.3" >BDC</text>
<text x="620.00" y="437.00" font-size="11.5"  textLength="21.75" lengthAdjust="spacingAndGlyphs" fill="#141414" stroke="#141414" stroke-width="0.3" >TDC</text>
<text x="768.50" y="428.75" font-size="11.5"  textLength="22.00" lengthAdjust="spacingAndGlyphs" fill="#141414" stroke="#141414" stroke-width="0.3" >TDC</text>
<text x="650.00" y="408.00" font-size="11.5"  textLength="115.50" lengthAdjust="spacingAndGlyphs" fill="#141414" stroke="#141414" stroke-width="0.3" word-spacing="3">Primary + Secondary</text>
<text x="652.50" y="420.00" font-size="11.5"  textLength="68.25" lengthAdjust="spacingAndGlyphs" fill="#141414" stroke="#141414" stroke-width="0.3" word-spacing="2">+ Secondary</text>
<text x="650.00" y="432.50" font-size="11.5"  textLength="42.50" lengthAdjust="spacingAndGlyphs" fill="#141414" stroke="#141414" stroke-width="0.3" >auxiliary</text>
<text x="703.00" y="434.50" font-size="11.5"  textLength="23.25" lengthAdjust="spacingAndGlyphs" fill="#141414" stroke="#141414" stroke-width="0.3" >BDC</text>
<text x="648.75" y="450.75" font-size="11.5"  textLength="53.75" lengthAdjust="spacingAndGlyphs" fill="#141414" stroke="#141414" stroke-width="0.3" word-spacing="2">Primary +</text>
<text x="648.75" y="462.50" font-size="11.5"  textLength="55.00" lengthAdjust="spacingAndGlyphs" fill="#141414" stroke="#141414" stroke-width="0.3" >Secondary</text>
<text x="655.50" y="484.50" font-size="11.5"  textLength="39.50" lengthAdjust="spacingAndGlyphs" fill="#141414" stroke="#141414" stroke-width="0.3" >Primary</text>
<text x="528.00" y="521.25" font-size="11.5"  textLength="18.25" lengthAdjust="spacingAndGlyphs" fill="#141414" stroke="#141414" stroke-width="0.3" >75°</text>
<text x="520.75" y="533.00" font-size="11.5"  textLength="38.75" lengthAdjust="spacingAndGlyphs" fill="#141414" stroke="#141414" stroke-width="0.3" >(BBDC)</text>
<text x="610.75" y="525.00" font-size="11.5"  textLength="18.00" lengthAdjust="spacingAndGlyphs" fill="#141414" stroke="#141414" stroke-width="0.3" >32°</text>
<text x="632.50" y="521.25" font-size="11.5"  textLength="17.50" lengthAdjust="spacingAndGlyphs" fill="#141414" stroke="#141414" stroke-width="0.3" >45°</text>
<text x="655.75" y="525.00" font-size="11.5"  textLength="18.00" lengthAdjust="spacingAndGlyphs" fill="#141414" stroke="#141414" stroke-width="0.3" >48°</text>
<text x="633.75" y="536.25" font-size="11.5"  textLength="37.50" lengthAdjust="spacingAndGlyphs" fill="#141414" stroke="#141414" stroke-width="0.3" >(ATDC)</text>
<text x="693.75" y="520.50" font-size="11.5"  textLength="17.50" lengthAdjust="spacingAndGlyphs" fill="#141414" stroke="#141414" stroke-width="0.3" >30°</text>
<text x="713.75" y="520.50" font-size="11.5"  textLength="36.25" lengthAdjust="spacingAndGlyphs" fill="#141414" stroke="#141414" stroke-width="0.3" >40°80°</text>
<text x="703.75" y="537.00" font-size="11.5"  textLength="38.25" lengthAdjust="spacingAndGlyphs" fill="#141414" stroke="#141414" stroke-width="0.3" >(ABDC)</text>
<text x="571.25" y="553.75" font-size="11.5"  textLength="140.75" lengthAdjust="spacingAndGlyphs" fill="#141414" stroke="#141414" stroke-width="0.3" >Eccentric shaft angle [deg]</text>
<text x="584.25" y="569.30" font-size="11.5" font-weight="bold" textLength="99.00" lengthAdjust="spacingAndGlyphs" fill="#141414" stroke="#141414" stroke-width="0.3" >Conventional type</text>
<text transform="translate(480.6 508) rotate(-90)" font-size="11.5" textLength="77" lengthAdjust="spacingAndGlyphs" fill="#141414" stroke="#141414" stroke-width="0.3">Port open area</text>
<text x="472.50" y="573.00" font-size="11.5"  textLength="22.00" lengthAdjust="spacingAndGlyphs" fill="#141414" stroke="#141414" stroke-width="0.3" >TDC</text>
<text x="546.25" y="574.50" font-size="11.5"  textLength="23.75" lengthAdjust="spacingAndGlyphs" fill="#141414" stroke="#141414" stroke-width="0.3" >BDC</text>
<text x="620.00" y="585.00" font-size="11.5"  textLength="21.25" lengthAdjust="spacingAndGlyphs" fill="#141414" stroke="#141414" stroke-width="0.3" >TDC</text>
<text x="644.25" y="586.25" font-size="11.5"  textLength="39.00" lengthAdjust="spacingAndGlyphs" fill="#141414" stroke="#141414" stroke-width="0.3" >Primary</text>
<text x="692.00" y="582.50" font-size="11.5"  textLength="23.50" lengthAdjust="spacingAndGlyphs" fill="#141414" stroke="#141414" stroke-width="0.3" >BDC</text>
<text x="767.00" y="580.75" font-size="11.5"  textLength="22.25" lengthAdjust="spacingAndGlyphs" fill="#141414" stroke="#141414" stroke-width="0.3" >TDC</text>
<text x="633.25" y="601.25" font-size="11.5"  textLength="68.00" lengthAdjust="spacingAndGlyphs" fill="#141414" stroke="#141414" stroke-width="0.3" word-spacing="2">+ Secondary</text>
<text x="574.50" y="628.00" font-size="11.5"  textLength="41.75" lengthAdjust="spacingAndGlyphs" fill="#141414" stroke="#141414" stroke-width="0.3" >Exhaust</text>
<text x="655.50" y="630.50" font-size="11.5"  textLength="39.50" lengthAdjust="spacingAndGlyphs" fill="#141414" stroke="#141414" stroke-width="0.3" >Primary</text>
<text x="527.50" y="666.25" font-size="11.5"  textLength="18.00" lengthAdjust="spacingAndGlyphs" fill="#141414" stroke="#141414" stroke-width="0.3" >75°</text>
<text x="517.00" y="677.50" font-size="11.5"  textLength="38.75" lengthAdjust="spacingAndGlyphs" fill="#141414" stroke="#141414" stroke-width="0.3" >(BBDC)</text>
<text x="624.50" y="666.25" font-size="11.5"  textLength="18.00" lengthAdjust="spacingAndGlyphs" fill="#141414" stroke="#141414" stroke-width="0.3" >32°</text>
<text x="645.00" y="666.25" font-size="11.5"  textLength="50.00" lengthAdjust="spacingAndGlyphs" fill="#141414" stroke="#141414" stroke-width="0.3" >48.5°/38°</text>
<text x="702.00" y="666.25" font-size="11.5"  textLength="40.50" lengthAdjust="spacingAndGlyphs" fill="#141414" stroke="#141414" stroke-width="0.3" >50°/38°</text>
<text x="643.25" y="680.50" font-size="11.5"  textLength="37.50" lengthAdjust="spacingAndGlyphs" fill="#141414" stroke="#141414" stroke-width="0.3" >(ATDC)</text>
<text x="703.75" y="681.25" font-size="11.5"  textLength="38.25" lengthAdjust="spacingAndGlyphs" fill="#141414" stroke="#141414" stroke-width="0.3" >(ABDC)</text>
<text x="562.50" y="700.75" font-size="11.5"  textLength="140.75" lengthAdjust="spacingAndGlyphs" fill="#141414" stroke="#141414" stroke-width="0.3" >Eccentric shaft angle [deg]</text>
<text transform="translate(479.6 655) rotate(-90)" font-size="11.5" textLength="77" lengthAdjust="spacingAndGlyphs" fill="#141414" stroke="#141414" stroke-width="0.3">Port open area</text>
<text x="751.5" y="716.2" font-size="7.2" textLength="43.5" lengthAdjust="spacingAndGlyphs" fill="#222">57G04X-514</text>
<text x="328.00" y="242.50" font-size="11.5" font-weight="bold" textLength="49.00" lengthAdjust="spacingAndGlyphs" fill="#141414" stroke="#141414" stroke-width="0.3" >Australia</text>
<text x="574.25" y="189.50" font-size="12"  textLength="43.75" lengthAdjust="spacingAndGlyphs" fill="#141414" stroke="#141414" stroke-width="0.3" >Auxiliary</text>
<text x="574.25" y="202.75" font-size="12"  textLength="50.75" lengthAdjust="spacingAndGlyphs" fill="#141414" stroke="#141414" stroke-width="0.3" word-spacing="2">port valve</text>
<text x="407.50" y="338.00" font-size="12"  textLength="43.00" lengthAdjust="spacingAndGlyphs" fill="#141414" stroke="#141414" stroke-width="0.3" >Actuator</text>
<text x="625.00" y="396.50" font-size="10.5" font-weight="bold" textLength="17.00" lengthAdjust="spacingAndGlyphs" fill="#141414" stroke="#141414" stroke-width="0.3" >6PI</text>
<text x="305.50" y="443.25" font-size="11" font-weight="bold" textLength="90.75" lengthAdjust="spacingAndGlyphs" fill="#141414" stroke="#141414" stroke-width="0.3" word-spacing="2">Except Australia</text>
<text x="346.25" y="496.75" font-size="12"  textLength="43.00" lengthAdjust="spacingAndGlyphs" fill="#141414" stroke="#141414" stroke-width="0.3" >Actuator</text>
<text x="283.10" y="629.80" font-size="12"  textLength="68.80" lengthAdjust="spacingAndGlyphs" fill="#141414" stroke="#141414" stroke-width="0.3" word-spacing="2">Shutter valve</text>
<path d="M329.5 251.5 H375.5" stroke="#1616e6" stroke-width="3.2" stroke-linecap="round"/>
<path d="M575.5 175 H623.5 L632 201.5" fill="none" stroke="#1616e6" stroke-width="3.4" stroke-linecap="round" stroke-linejoin="round"/>
<path d="M572.5 187.7 L477.5 275" stroke="#1a1ac0" stroke-width="2.2" stroke-linecap="round"/>
<path d="M571.5 188.6 L479 273.6" stroke="#f4f4e0" stroke-width="0.6" stroke-linecap="round"/>
<path d="M413 343.8 H447.5" stroke="#1616e6" stroke-width="3.2" stroke-linecap="round"/>
<path d="M296.5 451.3 H405.5 L385 481.5" fill="none" stroke="#ea1620" stroke-width="3.2" stroke-linecap="round" stroke-linejoin="miter"/>
<path d="M283.4 635.9 H350.5" stroke="#ea1620" stroke-width="3.4" stroke-linecap="round"/>
</g></svg>
<div class="a" style="left:4px;top:117px;width:999px;height:5px;background:linear-gradient(to bottom,rgba(70,70,70,.9),rgba(70,70,70,.45) 40%,rgba(70,70,70,0));"></div>
<!-- desktop strip visible between window and taskbar -->
<div class="a" style="left:0;top:725px;width:1024px;height:9px;background:#0b4a9c;"></div>
<div class="a" style="left:212px;top:725px;width:556px;height:9px;background:linear-gradient(to right,#9a5a22 0%,#b8732e 20%,#7a3f16 32%,#46250f 44%,#3a1e0c 52%,#7d5630 60%,#a98256 75%,#b88a5c 88%,#c06a28 100%);"></div>
<div class="a" style="left:212px;top:725px;width:556px;height:9px;background:linear-gradient(to bottom,rgba(40,20,8,.35),rgba(0,0,0,0) 60%);"></div>
<div class="a" style="left:766px;top:725px;width:253px;height:9px;background:linear-gradient(to bottom,#fdfdfb 0%,#f7f6ee 50%,#ece9d8 100%);border-top-left-radius:9px 9px;"></div>
<div class="a" style="left:1018px;top:725px;width:6px;height:9px;background:#0a3fc0;"></div>
<div class="a" style="left:0;top:725px;width:212px;height:9px;overflow:hidden;"><div class="t" style="left:18.5px;top:3.5px;font-size:11.5px;color:#fff;--w:47px;transform:scaleX(0.9038)">CyberLink</div></div>
<div class="a" style="left:440px;top:725px;width:160px;height:9px;overflow:hidden;"><div class="t" style="left:45px;top:-8px;font-size:11.5px;color:#fff;--w:63px;transform:scaleX(0.9403)">AT&amp;T Yahoo!</div><div class="t" style="left:69px;top:6px;font-size:11.5px;color:#fff;">(2)</div></div>

<div id="taskbar" class="a"></div>
<!-- start button -->
<div class="a" style="left:0;top:735px;width:97px;height:33px;border-radius:0 12px 12px 0/0 16px 16px 0;background:linear-gradient(to bottom,#2f7d2e 0%,#6cc162 6%,#4faa4b 14%,#3f9c3d 32%,#3a9438 60%,#338d31 80%,#2a7a28 92%,#246a22 100%);box-shadow:inset -2px 0 4px rgba(20,70,20,.55), 1px 0 2px rgba(10,40,120,.5);"></div>
<svg class="a" style="left:10px;top:742px" width="20" height="20" viewBox="0 0 17.4 17.4">
  <path d="M2.2 3.6 C4.4 2.2 6.4 2.4 8.6 3.8 L7.4 9 C5.4 7.7 3.2 7.6 1 8.8 Z" fill="#e8532e"/>
  <path d="M9.8 4.3 C12 5.6 14 5.6 16.4 4.4 L15.2 9.6 C13 10.8 10.8 10.6 8.7 9.4 Z" fill="#7ac043"/>
  <path d="M0.8 10 C3 8.8 5 9 7.2 10.3 L6 15.6 C4 14.3 1.8 14.2 -0.4 15.4 Z" fill="#3f7de0" transform="translate(.6,0)"/>
  <path d="M8.4 10.8 C10.6 12 12.6 12 15 10.8 L13.8 16 C11.6 17.2 9.4 17 7.3 15.8 Z" fill="#f6c22e"/>
</svg>
<div class="t" style="left:35px;top:743.5px;font-size:18.5px;font-weight:bold;font-style:italic;color:#fff;text-shadow:1px 1px 1px #1d4d1c;--w:38.5px;transform:scaleX(0.9625)">start</div>
<div class="a" style="left:0;top:734px;width:1024px;height:3px;background:linear-gradient(to bottom,#1d54c8 0%,#4a8af4 40%,rgba(58,128,238,0) 100%);"></div>
<!-- gripper -->
<svg class="a" style="left:104px;top:743px" width="9" height="22"><g fill="#143f9e"><circle cx="2" cy="3" r="1.1"/><circle cx="2" cy="8" r="1.1"/><circle cx="2" cy="13" r="1.1"/><circle cx="2" cy="18" r="1.1"/><circle cx="6" cy="5.5" r="1.1"/><circle cx="6" cy="10.5" r="1.1"/><circle cx="6" cy="15.5" r="1.1"/><circle cx="6" cy="20.5" r="1.1"/></g></svg>
<!-- buttons -->
<div class="a tbtn" style="left:117px;width:122px;"></div>
<div class="a tbtn" style="left:241px;width:122px;"></div>
<div class="a tbtn" style="left:365px;width:122px;"></div>
<div class="a tbtn" style="left:488px;width:123px;background:linear-gradient(to bottom,#1c4cb4 0%,#2258c8 20%,#2a62d2 100%);box-shadow:inset 1px 1px 2px rgba(10,30,110,.8);"></div>
<!-- yahoo smiley -->
<svg class="a" style="left:126px;top:745px" width="15.5" height="15.5" viewBox="0 0 17 17"><circle cx="8.5" cy="8.5" r="7.6" fill="#f9c42a" stroke="#9a5a10" stroke-width="1"/><path d="M3.2 8.3 H13.8 C13.6 12.2 11 14 8.5 14 C6 14 3.4 12.2 3.2 8.3 Z" fill="#c8201c"/><path d="M3.6 8.4 H13.4 V10 H3.6 Z" fill="#fff"/><circle cx="6" cy="5.2" r="1" fill="#3a2408"/><circle cx="11" cy="5.2" r="1" fill="#3a2408"/></svg>
<div class="t tbtxt" style="left:146px;--w:78px;transform:scaleX(0.9512)">AT&amp;T Yahoo! …</div>
<svg class="a" style="left:248px;top:744px" width="19" height="17" viewBox="0 0 19 17"><circle cx="5" cy="5.5" r="3.2" fill="none" stroke="#d9e6f8" stroke-width="1.4"/><path d="M6 7 L11 10 L17 8 L16 13.5 L11 14.5 L8 11 Z" fill="#8a2f8a"/><path d="M11 10.5 L13 12 L16 9.5" stroke="#fff" stroke-width=".9" fill="none"/><path d="M2 3 C4 1 7 1 9 3" stroke="#9ec8f0" stroke-width="1" fill="none"/></svg>
<div class="t tbtxt" style="left:269.5px;--w:77px;transform:scaleX(0.9277)">please help m…</div>
<svg class="a" style="left:373px;top:744px" width="17" height="17" viewBox="0 0 17 17"><defs><linearGradient id="cdg" x1="0" y1="0" x2="1" y2="1"><stop offset="0" stop-color="#fdfdff"/><stop offset=".5" stop-color="#c6cbe2"/><stop offset="1" stop-color="#f2f2fa"/></linearGradient></defs><circle cx="8.5" cy="8.5" r="7.6" fill="url(#cdg)" stroke="#8e96b8" stroke-width=".8"/><circle cx="8.5" cy="8.5" r="2.4" fill="#dfe3f2" stroke="#7f88ad" stroke-width=".8"/><circle cx="8.5" cy="8.5" r=".9" fill="#3d6fd8"/></svg>
<div class="t tbtxt" style="left:393.5px;--w:16px;transform:scaleX(1.0667)">D:\</div>
<svg class="a" style="left:499px;top:743px" width="17" height="19" viewBox="0 0 17 19">
  <path d="M3.5 2 L11.5 2 L15 5.5 L15 17.5 L3.5 17.5 Z" fill="#fff" stroke="#c9c9d8" stroke-width="0.6"/>
  <path d="M11.5 2 L11.5 5.5 L15 5.5 Z" fill="#d8d8e4"/>
  <rect x="0.5" y="3" width="9.6" height="3.6" rx="0.5" fill="#d4101c"/>
  <path d="M5.6 15 C7.4 13.2 8.6 10.8 9 8.4 C9.2 7.4 8.2 7.4 8.4 8.4 C8.9 11 10.4 12.8 13 13.2 C13.9 13.3 13.7 12.5 12.8 12.5 C10.3 12.6 7.4 13.6 5.9 15.3 C5.3 15.9 5 15.5 5.6 15 Z" fill="none" stroke="#e05a52" stroke-width="0.9"/>
</svg>
<div class="t tbtxt" style="left:518.5px;--w:80px;transform:scaleX(0.8791)">NZEMISSIONS…</div>
<!-- tray -->
<div class="a" style="left:625px;top:734px;width:399px;height:34px;background:linear-gradient(to bottom,#2a66da 0%,#3a7eec 6%,#2f74e6 11%,#1ea4f6 15%,#1a9cf0 22%,#1590e8 50%,#1286e0 85%,#0e70c8 100%);box-shadow:inset 1px 0 0 #0e4aa8, inset 2px 0 0 #3fa8f6;"></div>
<div class="t" style="left:965.5px;top:747.5px;font-size:11.5px;color:#fff;--w:44px;transform:scaleX(0.9167)">11:41 PM</div>

<!-- tray icons -->
<svg class="a" style="left:636px;top:745px" width="16" height="16" viewBox="0 0 16 16"><rect x=".5" y=".5" width="14.5" height="15" fill="#f6a21c" stroke="#fbd27a" stroke-width="1"/><path d="M3 12 C4 6 7 9 7 5 C7 3 10 3 10 5 C10 9 5 9 8 12 M9 8 C12 6 13 10 10 12" stroke="#d8401c" stroke-width="1.3" fill="none"/></svg>
<svg class="a" style="left:654px;top:745px" width="17" height="17" viewBox="0 0 17 17"><circle cx="8.5" cy="8.5" r="6.3" fill="none" stroke="#1a2fb8" stroke-width="2.2"/><path d="M2.2 8.5 A6.3 6.3 0 0 1 8.5 2.2" fill="none" stroke="#c8181c" stroke-width="2.2"/><path d="M14.8 8.5 A6.3 6.3 0 0 1 8.5 14.8" fill="none" stroke="#c8181c" stroke-width="2.2"/><path d="M6.5 5.2 L10.6 2.2 L10.2 7 Z" fill="#1a2fb8"/><path d="M10.5 11.8 L6.4 14.8 L6.8 10 Z" fill="#1a2fb8"/></svg>
<svg class="a" style="left:673.5px;top:745.5px" width="14.5" height="14.5" viewBox="0 0 17 17"><circle cx="8.5" cy="8.5" r="7.6" fill="#f9c42a" stroke="#9a5a10" stroke-width="1"/><path d="M3.2 8.3 H13.8 C13.6 12.2 11 14 8.5 14 C6 14 3.4 12.2 3.2 8.3 Z" fill="#c8201c"/><path d="M3.6 8.4 H13.4 V10 H3.6 Z" fill="#fff"/><circle cx="6" cy="5.2" r="1" fill="#3a2408"/><circle cx="11" cy="5.2" r="1" fill="#3a2408"/></svg>
<svg class="a" style="left:690px;top:744px" width="16" height="17" viewBox="0 0 16 17"><rect x="3" y="1" width="10" height="7" fill="#b7b9c4" stroke="#6d6f80" stroke-width=".8"/><rect x=".8" y="5" width="9" height="7" fill="#d5d7e0" stroke="#6d6f80" stroke-width=".8"/><rect x="2" y="6.5" width="6.5" height="4" fill="#8fa0c8"/><circle cx="11" cy="12" r="4.2" fill="#fff" stroke="#2a8a2a" stroke-width="1"/><path d="M8.8 12 L10.4 13.8 L13.4 10" stroke="#1d8a1d" stroke-width="1.6" fill="none"/></svg>
<svg class="a" style="left:708px;top:744px" width="17" height="17" viewBox="0 0 17 17"><rect x=".5" y=".5" width="16" height="16" fill="#fff" stroke="#e8e8f0" stroke-width=".6"/><path d="M0 6.5 H17" stroke="#c01818" stroke-width="1.2"/><path d="M5.2 0 V12" stroke="#c01818" stroke-width="1.2"/><path d="M5.2 12 V17" stroke="#2233aa" stroke-width="1.2"/></svg>
<svg class="a" style="left:727px;top:746px" width="15" height="14" viewBox="0 0 15 14"><path d="M1 9 V4.5 H8 L10.5 7 H13.5 V11 H1 Z" fill="#f3f3f3" stroke="#777" stroke-width=".7"/><rect x="2" y="2" width="6" height="3" fill="#cfd4dc"/><circle cx="4" cy="11.2" r="2" fill="#333"/><circle cx="11" cy="11.2" r="2" fill="#333"/><circle cx="4" cy="11.2" r=".8" fill="#ddd"/><circle cx="11" cy="11.2" r=".8" fill="#ddd"/></svg>
<svg class="a" style="left:745px;top:744.5px" width="13" height="16" viewBox="0 0 13 16"><path d="M6.5 .8 C8.5 2.4 10.4 2.8 12.2 2.8 C12.4 8.5 10.6 12.6 6.5 15.2 C2.4 12.6 .6 8.5 .8 2.8 C2.6 2.8 4.5 2.4 6.5 .8 Z" fill="#f3cf22" stroke="#9a7a08" stroke-width=".9"/><rect x="5.7" y="4" width="1.7" height="5" fill="#222"/><rect x="5.7" y="10" width="1.7" height="1.7" fill="#222"/></svg>
<svg class="a" style="left:761px;top:744px" width="16" height="17" viewBox="0 0 16 17"><path d="M1 12 L8 1 L9 8 L15 9 L6 15 Z" fill="#3f86e4"/><circle cx="6.8" cy="9" r="3.4" fill="#7fb6f2" stroke="#3f78c8" stroke-width=".8"/></svg>
<svg class="a" style="left:780px;top:744px" width="17" height="17" viewBox="0 0 17 17"><circle cx="9.5" cy="3.4" r="2.6" fill="#2f8a4a"/><path d="M5.5 12 C5.5 7.5 13.5 7.5 13.5 12 Z" fill="#2f8a4a"/><circle cx="4.5" cy="5.4" r="2.4" fill="#78b6ea"/><path d="M.8 14 C.8 9.5 8.2 9.5 8.2 14 Z" fill="#78b6ea"/><circle cx="11.8" cy="12.2" r="4" fill="#d82418" stroke="#f6d8d4" stroke-width=".6"/><path d="M10 10.4 L13.6 14 M13.6 10.4 L10 14" stroke="#fff" stroke-width="1.4"/></svg>
<svg class="a" style="left:798px;top:744px" width="17" height="17" viewBox="0 0 17 17"><circle cx="6" cy="6" r="5.2" fill="#a9d2ee" stroke="#e7f2fa" stroke-width=".8"/><path d="M1.5 4.5 H10.5 M1 7 H11 M3 9.5 H9" stroke="#5f9ccc" stroke-width=".9"/><rect x="6" y="9.5" width="10" height="6.5" fill="#7a2a9a"/><path d="M9 11 L11 13 L13 11 M11 13 V15" stroke="#fff" stroke-width="1" fill="none"/></svg>
<svg class="a" style="left:817px;top:744px" width="16" height="18" viewBox="0 0 16 18"><path d="M2 1 C6 2 10 7 12 12 L9 14 C5 10 2 6 2 1 Z" fill="#b9bec8" stroke="#2c2c34" stroke-width="1"/><path d="M9 14 L8 17 L13 15 L12 12 Z" fill="#2c3c8c"/><path d="M4 9 L1.5 12 L5.5 11.5 Z M9.5 6 L12.5 5.5 L11.5 9 Z" fill="#3a3a44"/></svg>
<svg class="a" style="left:835px;top:744px" width="16" height="17" viewBox="0 0 16 17"><circle cx="7.5" cy="7.5" r="5.6" fill="#dff0fb" stroke="#4aa8e8" stroke-width="2.6"/><path d="M9.5 10.5 L13 15" stroke="#4aa8e8" stroke-width="2.6"/><path d="M6 9 L9.5 5.5" stroke="#8ccaf2" stroke-width="1.2"/></svg>
<svg class="a" style="left:853px;top:745px" width="14" height="16" viewBox="0 0 14 16"><path d="M11.5 1.5 C4 3 1 8 2 12 C3 15.5 9 15 10.5 11 C12 7.5 9.5 5 7 6.5" fill="none" stroke="#c81c24" stroke-width="1.6"/><path d="M4.5 8 C6 12 9 12 11 9" fill="none" stroke="#8a1218" stroke-width="1"/></svg>
<svg class="a" style="left:870px;top:744px" width="16" height="17" viewBox="0 0 16 17"><path d="M1 1.5 H13 L15 10.5 H3 Z" fill="#1a1a1a"/><path d="M2.4 2.6 H5.2 L5.9 4.8 H3 Z" fill="#e01818"/><path d="M5.6 2.6 H8.6 L9.2 4.8 H6.3 Z" fill="#18b018"/><path d="M9 2.6 H12 L12.5 4.8 H9.6 Z" fill="#e8d818"/><path d="M3.2 5.4 H6 L6.8 8.8 H4 Z" fill="#e8e018"/><path d="M6.5 5.4 H9.4 L10.2 8.8 H7.3 Z" fill="#1838e0"/><path d="M9.8 5.4 H12.7 L13.6 8.8 H10.6 Z" fill="#c818c8"/><rect x="5" y="11" width="7" height="2.2" fill="#eee" stroke="#222" stroke-width=".6"/><rect x="3" y="13.6" width="11" height="2.4" fill="#f4f4f4" stroke="#222" stroke-width=".6"/></svg>
<svg class="a" style="left:888px;top:744px" width="15" height="17" viewBox="0 0 15 17"><rect x="5" y="1" width="9" height="7.5" fill="#3a4a8a" stroke="#aeb6d8" stroke-width="1"/><rect x="1" y="5.5" width="9" height="7.5" fill="#4a5a9c" stroke="#c2c8e4" stroke-width="1"/><path d="M3 14.8 H9" stroke="#b4c4f0" stroke-width="2"/><path d="M8 10.5 H13" stroke="#b4c4f0" stroke-width="1.6"/></svg>
<svg class="a" style="left:906px;top:744px" width="16" height="17" viewBox="0 0 16 17"><circle cx="5.5" cy="6.5" r="4.8" fill="#7a7f88" stroke="#d0d4dc" stroke-width=".8"/><circle cx="5.5" cy="6.5" r="2" fill="#42464e"/><circle cx="10.6" cy="11" r="4.4" fill="#e03418" stroke="#f8d8d0" stroke-width=".7"/><path d="M8 9.4 L13.2 12.6" stroke="#fff" stroke-width="1.6"/></svg>
<svg class="a" style="left:924px;top:743px" width="17" height="18" viewBox="0 0 17 18"><path d="M1.5 1 C2 7 4 11 9.5 12.5" fill="none" stroke="#f0f0f0" stroke-width="2"/><path d="M8 10.5 L14 13 L12.5 16.5 L6.8 14 Z" fill="#2a2a2a"/><path d="M11.5 12 L15.5 13.8 L14.4 16.6 L10.4 14.8 Z" fill="#e0d818"/></svg>
<svg class="a" style="left:942px;top:744px" width="17" height="17" viewBox="0 0 17 17"><rect x=".8" y=".8" width="15" height="15.4" rx="2.4" fill="#d81820" stroke="#f4e4e4" stroke-width="1"/><path d="M3.4 13 V4 L6.2 4 L8.3 9.6 L10.4 4 L13.2 4 V13 H11 V8 L9 13 H7.6 L5.6 8 V13 Z" fill="#fff" opacity=".0"/><path d="M3.2 13.2 V3.8 H5.6 L8.3 9 L11 3.8 H13.4 V13.2" fill="none" stroke="#7a0c10" stroke-width="2.2" stroke-linejoin="miter"/></svg>


</body>
</html>
